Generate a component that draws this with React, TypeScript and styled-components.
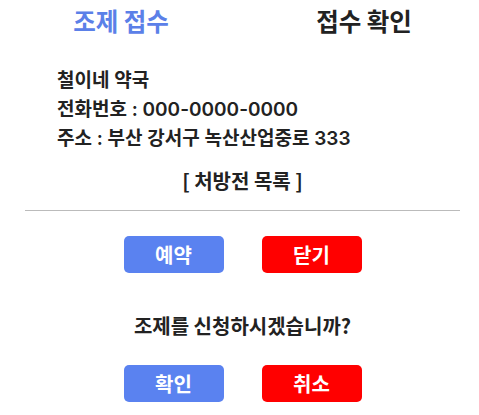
import React from "react";
import styled, { createGlobalStyle } from "styled-components";

const Global = createGlobalStyle`
  html, body { margin: 0; padding: 0; background: #fff; }
  body { font-family: "Noto Sans CJK KR", "Noto Sans", sans-serif; color: #222; }
`;

const Page = styled.div`
  width: 435px;
  margin-left: 25px;
  display: flex;
  flex-direction: column;
`;

const Tabs = styled.div`
  display: flex;
  justify-content: center;
  padding-top: 4px;
  height: 34px;
`;

const Tab = styled.div<{ $active?: boolean }>`
  flex: 0 0 243px;
  text-align: center;
  font-size: 24.5px;
  font-weight: 700;
  line-height: 34px;
  color: ${(p) => (p.$active ? "#5b80e8" : "#222")};
`;

const Info = styled.div`
  margin-top: 28px;
  padding-left: 32px;
  display: flex;
  flex-direction: column;
`;

const InfoLine = styled.div`
  font-family: "Inter", "Noto Sans CJK KR", sans-serif;
  font-size: 19px;
  font-weight: 600;
  line-height: 29px;
`;

const ListLink = styled.div`
  margin-top: 13px;
  text-align: center;
  font-size: 20px;
  font-weight: 700;
  line-height: 30px;
`;

const Divider = styled.hr`
  margin: 14px 0 0;
  border: none;
  border-top: 1px solid #bbb;
`;

const ButtonRow = styled.div<{ $top: number }>`
  display: flex;
  justify-content: center;
  gap: 38px;
  margin-top: ${(p) => p.$top}px;
`;

const Button = styled.button<{ $variant: "primary" | "danger" }>`
  width: 100px;
  height: 37px;
  border: none;
  border-radius: 5px;
  font-family: inherit;
  font-size: 20px;
  font-weight: 700;
  color: #fff;
  background: ${(p) => (p.$variant === "primary" ? "#5a82f0" : "#ff0000")};
  padding: 0;
`;

const Question = styled.div`
  margin-top: 38px;
  text-align: center;
  font-size: 20px;
  font-weight: 700;
  line-height: 30px;
`;

export default function App() {
  return (
    <>
      <Global />
      <Page>
        <Tabs>
          <Tab $active>조제 접수</Tab>
          <Tab>접수 확인</Tab>
        </Tabs>
        <Info>
          <InfoLine>철이네 약국</InfoLine>
          <InfoLine>전화번호 : 000-0000-0000</InfoLine>
          <InfoLine>주소 : 부산 강서구 녹산산업중로 333</InfoLine>
        </Info>
        <ListLink>[ 처방전 목록 ]</ListLink>
        <Divider />
        <ButtonRow $top={25}>
          <Button $variant="primary">예약</Button>
          <Button $variant="danger">닫기</Button>
        </ButtonRow>
        <Question>조제를 신청하시겠습니까?</Question>
        <ButtonRow $top={24}>
          <Button $variant="primary">확인</Button>
          <Button $variant="danger">취소</Button>
        </ButtonRow>
      </Page>
    </>
  );
}
